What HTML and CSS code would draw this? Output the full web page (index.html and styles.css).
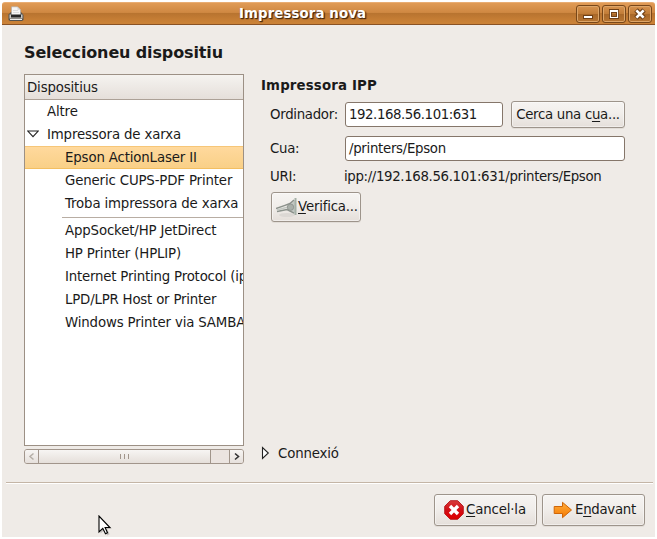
FILE: index.html
```html
<!DOCTYPE html>
<html lang="ca">
<head>
<meta charset="utf-8">
<title>Impressora nova</title>
<link rel="stylesheet" href="styles.css">
</head>
<body>
<div class="window">
  <header class="titlebar">
    <svg class="app-icon" width="16" height="16" viewBox="0 0 16 16">
      <path d="M.5 8.5 3 6h10l2.5 3v5L14 15H2l-1.5-1z" fill="#55534f"/>
      <path d="M1.5 8.5h13v4h-13z" fill="#c9c8c5"/>
      <path d="M3.5 9.5V.8h6l3 3v5.7z" fill="#f6f6f6" stroke="#aaa" stroke-width=".6"/>
      <path d="M9.5.8v3h3" fill="#d5d5d5"/>
      <path d="M5 4.5h5M5 6.5h6" stroke="#ddd"/>
      <path d="M3 8.5h10v3H3z" fill="#262626"/>
      <path d="M2 13.5h12" stroke="#eee"/>
    </svg>
    <h1 class="title">Impressora nova</h1>
    <div class="controls">
      <span class="control"><svg width="22" height="17" viewBox="0 0 22 17"><path d="M6 9h10v4H6z" fill="#704016"/><path d="M7 10h8v2H7z" fill="#fff"/></svg></span>
      <span class="control"><svg width="22" height="17" viewBox="0 0 22 17" fill="none"><path d="M7.5 4.5h7v7h-7z" stroke="#704016" stroke-width="3"/><path d="M7.5 4.5h7v7h-7z" stroke="#fff" stroke-width="1.2"/><path d="M7 5h8" stroke="#fff" stroke-width="2"/><path d="M8.5 6.5h5v4h-5z" stroke="#704016"/></svg></span>
      <span class="control"><svg width="22" height="17" viewBox="0 0 22 17" fill="none"><path d="m7 4 8 8m0-8-8 8" stroke="#704016" stroke-width="5"/><path d="m7.4 4.4 7.2 7.2m0-7.2-7.2 7.2" stroke="#fff" stroke-width="2.7"/></svg></span>
    </div>
  </header>
  <main class="content">
    <h2 class="heading">Seleccioneu dispositiu</h2>
    <div class="panes">
      <section class="devices">
        <div class="list">
          <div class="list-header">Dispositius</div>
          <div class="row top">Altre</div>
          <div class="row top"><svg class="expander" width="12" height="8" viewBox="0 0 12 8"><path d="M.8 1h10.4L6 6.6z" fill="#fff" stroke="#222" stroke-width="1.1"/></svg>Impressora de xarxa</div>
          <div class="row selected">Epson ActionLaser II</div>
          <div class="row">Generic CUPS-PDF Printer</div>
          <div class="row">Troba impressora de xarxa</div>
          <div class="separator"></div>
          <div class="row">AppSocket/HP JetDirect</div>
          <div class="row">HP Printer (HPLIP)</div>
          <div class="row tight">Internet Printing Protocol (ipp)</div>
          <div class="row tight">LPD/LPR Host or Printer</div>
          <div class="row">Windows Printer via SAMBA</div>
        </div>
        <div class="scrollbar">
          <span class="step"><svg width="13" height="13" viewBox="0 0 13 13"><path d="M8.5 3.5 5 6.5l3.5 3" fill="none" stroke="#b5afa7" stroke-width="1.5"/></svg></span>
          <span class="thumb"><i></i><i></i><i></i></span>
          <span class="trough"></span>
          <span class="step"><svg width="13" height="13" viewBox="0 0 13 13"><path d="M5 3.5l3.5 3-3.5 3" fill="none" stroke="#333" stroke-width="1.6"/></svg></span>
        </div>
      </section>
      <section class="details">
        <h3 class="subheading">Impressora IPP</h3>
        <div class="field host"><label class="label">Ordinador:</label><div class="entry">192.168.56.101:631</div><div class="button search">Cerca una c<u>u</u>a...</div></div>
        <div class="field queue"><label class="label">Cua:</label><div class="entry">/printers/Epson</div></div>
        <div class="field uri"><label class="label">URI:</label><span class="uri-text">ipp://192.168.56.101:631/printers/Epson</span></div>
        <div class="button verify">
          <svg width="22" height="22" viewBox="0 0 22 22">
            <ellipse cx="11" cy="19" rx="8" ry="2" fill="#dcd8d4"/>
            <path d="M12 10.5 19 4v14l-7-4z" fill="#c3c8c3"/>
            <path d="M0 12.6 9 9.4l5-1.9 4-3.5M1 15.6l10-2 7 3.5" fill="none" stroke="#8b918b" stroke-width="1.5"/>
            <path d="M1 14 12 11" stroke="#c3c8c3" stroke-width="1.4"/>
            <circle cx="14.5" cy="11.2" r="3.2" fill="#a9afa9" stroke="#8b918b" stroke-width=".8"/>
            <path d="M19.5 2v17" stroke="#a5b0a7" stroke-width="2"/>
          </svg><span><u>V</u>erifica...</span>
        </div>
        <div class="connection"><svg width="9" height="14" viewBox="0 0 9 14"><path d="M1.5 1.5v11L7.3 7z" fill="#fff" stroke="#222" stroke-width="1.1"/></svg><span>Connexió</span></div>
      </section>
    </div>
  </main>
  <footer class="actions">
    <div class="button cancel">
      <svg width="20" height="20" viewBox="0 0 20 20"><defs><linearGradient id="red" x2="0" y2="1"><stop stop-color="#d73b3b"/><stop offset=".5" stop-color="#d20d15"/><stop offset="1" stop-color="#df0000"/></linearGradient></defs><path d="M6.3.7h7.4l5.6 5.6v7.4l-5.6 5.6H6.3L.7 13.7V6.3z" fill="url(#red)" stroke="#b31217" stroke-width=".9"/><path d="m6 6 8 8m0-8-8 8" stroke="#fff" stroke-width="3.4"/></svg>
      <span><u>C</u>ancel·la</span>
    </div>
    <div class="button forward">
      <svg width="20" height="18" viewBox="0 0 20 18"><defs><linearGradient id="orange" x2="0" y2="1"><stop stop-color="#ffae3d"/><stop offset="1" stop-color="#f57900"/></linearGradient></defs><path d="M1.2 5.5h8.3V1.3L18.5 9l-9 7.7v-4.2H1.2z" fill="url(#orange)" stroke="#cf6508"/></svg>
      <span>E<u>n</u>davant</span>
    </div>
  </footer>
  <svg class="cursor" width="14" height="22" viewBox="0 0 14 22"><path d="M1.5 1.5v16l3.8-3.6 2.7 5.6 2.6-1.2-2.5-5.3h4.8z" transform="translate(1 1)" fill="#000" opacity=".18"/><path d="M1 1v16l3.8-3.6 2.7 5.3 2-1-2.4-5.2h4.8z" fill="#fff" stroke="#000" stroke-width="1.1"/></svg>
</div>
</body>
</html>
```
FILE: styles.css
```css
* { box-sizing: border-box; }
body {
  margin: 0;
  padding: 2px;
  background: #fff;
  color: #1a1a1a;
  font: 13.333px/23px "DejaVu Sans", sans-serif;
  letter-spacing: -0.3px;
}
h1, h2, h3 { margin: 0; }
svg { display: block; flex: none; }
u { text-underline-offset: 2px; text-decoration-thickness: 1px; text-decoration-skip-ink: none; }
.window {
  position: relative;
  display: flex;
  flex-direction: column;
  width: 653px;
  height: 535px;
  background: #efebe7;
  border-radius: 4px 4px 0 0;
}
.titlebar {
  display: flex;
  align-items: center;
  height: 23px;
  padding: 0 3px 0 6px;
  border-bottom: 1px solid #8a5224;
  border-top: 1px solid #e9ad73;
  border-radius: 3px 3px 0 0;
  background: linear-gradient(#e09b56, #cf8842 45%, #b87430 50%, #c67e35 80%, #cc8338);
}
.title {
  flex: 1;
  padding-left: 5px;
  color: #fff;
  font-size: 13.333px;
  line-height: 20px;
  text-align: center;
  letter-spacing: 0.1px;
  text-shadow: 1px 1px 1px #4a2b10, 1px 1px 1px #4a2b10;
}
.controls { display: flex; gap: 2px; }
.control {
  width: 24px;
  height: 18px;
  border: 1px solid #784719;
  border-radius: 3px;
  box-shadow: inset 0 0 0 1px #dda568;
  background: linear-gradient(#d6924e, #c17c37 50%, #a86728 50%, #b87632);
}
.content { flex: 1; padding: 16px 30px 0 22px; }
.heading { font-size: 16px; line-height: 24px; letter-spacing: -0.13px; }
.panes { display: flex; gap: 17px; padding-top: 9px; }
.devices { width: 220px; letter-spacing: -0.15px; }
.list {
  height: 372px;
  border: 1px solid #9c9085;
  background: #fff;
  overflow: hidden;
  white-space: nowrap;
}
.list-header {
  height: 25px;
  padding-left: 2px;
  border-bottom: 1px solid #aca197;
  background: linear-gradient(#f5f3f0, #e5dfda);
  line-height: 25px;
}
.row { height: 23px; padding-left: 40px; line-height: 24px; }
.row.top { display: flex; padding-left: 22px; }
.tight { letter-spacing: -0.2px; }
.expander { margin: 7px 8px 0 -20px; }
.selected {
  border-top: 1px solid #f6c678;
  border-bottom: 1px solid #f3bf61;
  background: linear-gradient(#ffd99d, #f9d087);
  line-height: 22px;
}
.separator { height: 2px; margin: 2px 0 0 37px; border-top: 1px solid #b8ada3; }
.scrollbar {
  display: flex;
  height: 15px;
  margin-top: 3px;
  border: 1px solid #a1958b;
  border-radius: 3px;
  background: #ebe4e0;
  overflow: hidden;
}
.step { width: 13px; background: linear-gradient(#f7f5f3, #e6e0dc); }
.thumb {
  display: flex;
  align-items: center;
  justify-content: center;
  gap: 2px;
  width: 173px;
  border: solid #a1958b;
  border-width: 0 1px;
  background: linear-gradient(#f7f5f3, #e5dfda);
}
.thumb i { width: 1px; height: 5px; background: #a1958b; margin-right: 1px; }
.trough { flex: 1; border-right: 1px solid #a1958b; }
.details { width: 364px; }
.subheading { font-size: 13.333px; line-height: 24px; height: 22px; letter-spacing: 0.15px; }
.field { display: flex; padding-left: 9px; }
.label { width: 75px; flex: none; }
.entry {
  height: 25px;
  padding-left: 4px;
  border: 1px solid #85766a;
  border-radius: 3px;
  background: #fff;
}
.button {
  display: flex;
  align-items: center;
  border: 1px solid #9d948b;
  border-radius: 3px;
  background: linear-gradient(#f6f4f2, #f1eeeb 45%, #e5dfda);
  box-shadow: inset 0 0 0 1px rgba(255, 255, 255, .45), 0 1px 0 #e2ddd8;
  white-space: nowrap;
}
.host { padding-top: 5px; height: 33px; }
.host .label { padding-top: 2px; }
.host .entry { width: 158px; margin-top: 1px; padding-left: 3px; letter-spacing: -0.45px; }
.search { width: 114px; height: 27px; margin-left: 8px; justify-content: center; }
.queue { height: 32px; padding-top: 7px; }
.queue .label { padding-top: 1px; }
.queue .entry { flex: 1; padding-left: 3px; }
.uri { padding-top: 4px; height: 28px; }
.uri-text { margin-left: -1px; letter-spacing: -0.36px; }
.verify { width: 90px; height: 30px; margin: 3px 0 0 10px; padding-left: 4px; letter-spacing: -0.2px; }
.verify span { padding-bottom: 2px; }
.connection { display: flex; align-items: center; height: 22px; margin-top: 220px; gap: 8px; letter-spacing: -0.15px; }
.actions {
  display: flex;
  justify-content: flex-end;
  gap: 5px;
  height: 55px;
  margin: 0 2px 0 4px;
  padding: 11px 8px 0 0;
  border-top: 1px solid #c4b5a6;
  box-shadow: inset 0 1px 0 #fff;
}
.actions .button { width: 103px; height: 32px; }
.actions span { padding-bottom: 2px; }
.cancel { padding-left: 9px; gap: 2px; letter-spacing: -0.15px; }
.forward { padding-left: 10px; gap: 2px; }
.cursor { position: absolute; left: 96px; top: 513px; }
```
